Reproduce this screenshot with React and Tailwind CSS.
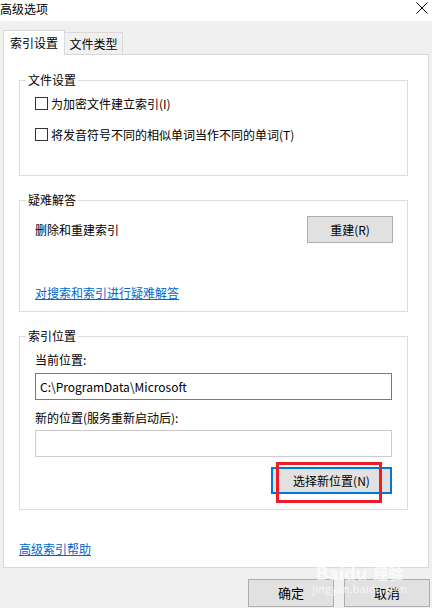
const FONT = { fontFamily: '"Microsoft YaHei", "Noto Sans CJK SC", "Noto Sans", sans-serif' }

function Checkbox({ label }) {
  return (
    <div className="flex items-center h-[13px]">
      <span className="w-[13px] h-[13px] border border-[#333333] bg-white shrink-0" />
      <span className="ml-[3px] text-[12px] leading-[16px] text-black whitespace-nowrap">{label}</span>
    </div>
  )
}

function Group({ title, className, children }) {
  return (
    <div className={`relative ml-[15px] w-[389px] border border-[#dcdcdc] ${className}`}>
      <span className="absolute -top-[9px] left-[6px] bg-white px-[2px] text-[12px] leading-[16px] text-black">
        {title}
      </span>
      {children}
    </div>
  )
}

function WinButton({ children, className = '', border = 'border border-[#adadad]' }) {
  return (
    <div
      className={`flex items-center justify-center bg-[#e1e1e1] ${border} text-[12px] leading-[16px] text-black ${className}`}
    >
      {children}
    </div>
  )
}

export default function App() {
  return (
    <div className="relative w-[432px] h-[608px] bg-[#f0f0f0] overflow-hidden select-none" style={FONT}>
      {/* title bar */}
      <div className="h-[21px] bg-white flex items-center justify-between">
        <span className="text-[12px] leading-[16px] text-black -mt-[4px]">高级选项</span>
        <svg width="12" height="12" viewBox="0 0 12 12" className="mr-[4px] -mt-[5px]">
          <path d="M0.5 0.5 L11.5 11.5 M11.5 0.5 L0.5 11.5" stroke="#000" strokeWidth="1" fill="none" />
        </svg>
      </div>

      {/* tabs */}
      <div className="mt-[9px] ml-[3px] flex items-end">
        <div className="relative z-10 -mb-px h-[25px] w-[62px] bg-white border border-b-0 border-[#d9d9d9] flex items-center justify-center text-[12px] leading-[16px] text-black">
          索引设置
        </div>
        <div className="h-[22px] w-[58px] bg-[#f0f0f0] border border-l-0 border-b-0 border-[#d9d9d9] flex items-center justify-center text-[12px] leading-[16px] text-black">
          文件类型
        </div>
      </div>

      {/* panel */}
      <div className="ml-[3px] w-[426px] h-[514px] bg-white border border-[#d9d9d9]">
        <Group title="文件设置" className="mt-[25px] h-[96px]">
          <div className="pl-[15px] pt-[16px] flex flex-col gap-[18px]">
            <Checkbox label="为加密文件建立索引(I)" />
            <Checkbox label="将发音符号不同的相似单词当作不同的单词(T)" />
          </div>
        </Group>

        <Group title="疑难解答" className="mt-[24px] h-[112px]">
          <div className="pl-[15px] pr-[14px] pt-[15px] flex items-center justify-between">
            <span className="text-[12px] leading-[16px] text-black">删除和重建索引</span>
            <WinButton className="w-[86px] h-[27px]">重建(R)</WinButton>
          </div>
          <div className="pl-[15px] mt-[36px]">
            <span className="text-[12px] leading-[16px] text-[#0066cc] underline">对搜索和索引进行疑难解答</span>
          </div>
        </Group>

        <Group title="索引位置" className="mt-[24px] h-[174px]">
          <div className="pl-[15px] pt-[15px] flex flex-col">
            <span className="text-[12px] leading-[16px] text-black">当前位置:</span>
            <div className="mt-[5px] w-[357px] h-[27px] border border-[#7a7a7a] bg-white flex items-center pl-[4px] text-[12px] leading-[16px] text-black">
              C:\ProgramData\Microsoft
            </div>
            <span className="mt-[10px] text-[12px] leading-[16px] text-black">新的位置(服务重新启动后):</span>
            <div className="mt-[4px] w-[357px] h-[27px] border border-[#cccccc] bg-white" />
            <div className="mt-[10px] w-[357px] flex justify-end">
              <div className="relative">
                <WinButton className="w-[121px] h-[27px]" border="border-2 border-[#0078d7]">
                  选择新位置(N)
                </WinButton>
                <div className="absolute -top-[5px] left-[5px] w-[106px] h-[41px] border-[3px] border-[#ee1c25]" />
              </div>
            </div>
          </div>
        </Group>

        <div className="ml-[15px] mt-[25px]">
          <span className="text-[12px] leading-[16px] text-[#0066cc] underline">高级索引帮助</span>
        </div>
      </div>

      {/* bottom buttons */}
      <div className="mt-[11px] flex justify-end gap-[10px] pr-[2px]">
        <WinButton className="w-[86px] h-[28px] text-[13px]">确定</WinButton>
        <WinButton className="w-[86px] h-[28px] text-[13px]">取消</WinButton>
      </div>

      {/* watermark */}
      <div className="pointer-events-none absolute left-[312px] top-[562px] flex flex-col items-center text-white/70">
        <div className="flex items-end gap-[6px]">
          <span className="text-[18px] leading-[20px] font-bold">Baidu</span>
          <span className="text-[15px] leading-[18px] font-bold">经验</span>
        </div>
        <span className="text-[11px] leading-[13px]">jingyan.baidu.com</span>
      </div>
    </div>
  )
}
